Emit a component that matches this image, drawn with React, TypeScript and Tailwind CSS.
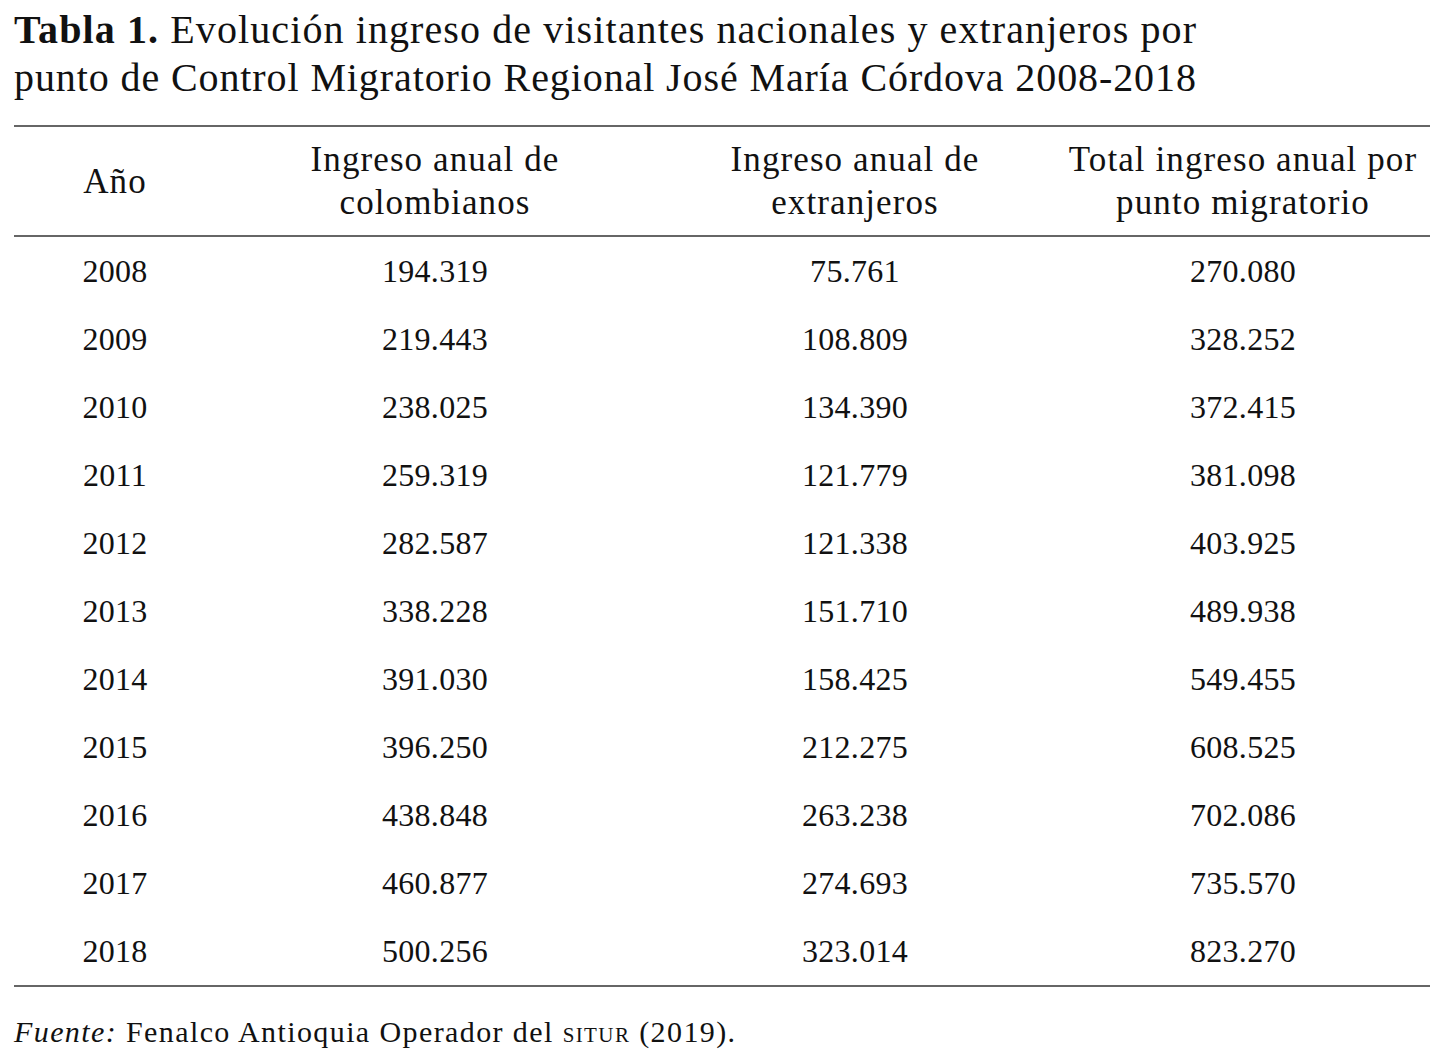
const ROWS: [string, string, string, string][] = [
  ['2008', '194.319', '75.761', '270.080'],
  ['2009', '219.443', '108.809', '328.252'],
  ['2010', '238.025', '134.390', '372.415'],
  ['2011', '259.319', '121.779', '381.098'],
  ['2012', '282.587', '121.338', '403.925'],
  ['2013', '338.228', '151.710', '489.938'],
  ['2014', '391.030', '158.425', '549.455'],
  ['2015', '396.250', '212.275', '608.525'],
  ['2016', '438.848', '263.238', '702.086'],
  ['2017', '460.877', '274.693', '735.570'],
  ['2018', '500.256', '323.014', '823.270'],
];

const COLS = 'grid grid-cols-[202px_438px_402px_374px]';

export default function App() {
  return (
    <div className="min-h-[1060px] w-[1443px] bg-white pl-[14px] pt-[6px] text-[#111] [font-family:'Liberation_Serif','DejaVu_Serif',serif]">
      <h1 className="text-[40px] leading-[48px] tracking-[1.1px]">
        <span className="font-bold">Tabla 1.</span> Evolución ingreso de visitantes nacionales y extranjeros por
        <br />
        <span className="tracking-[0.9px]">punto de Control Migratorio Regional José María Córdova 2008-2018</span>
      </h1>

      <div className="mt-[23px] w-[1416px]">
        <div className={`${COLS} h-[112px] items-center border-y-2 border-[#666] text-center text-[35px] leading-[43px] tracking-[1.1px]`}>
          <div>Año</div>
          <div>
            Ingreso anual de
            <br />
            colombianos
          </div>
          <div>
            Ingreso anual de
            <br />
            extranjeros
          </div>
          <div>
            Total ingreso anual por
            <br />
            punto migratorio
          </div>
        </div>

        <div className="border-b-2 border-[#666]">
          {ROWS.map((r) => (
            <div key={r[0]} className={`${COLS} h-[68px] items-center text-center text-[32px] tracking-[0.3px]`}>
              {r.map((c, i) => (
                <div key={i}>{c}</div>
              ))}
            </div>
          ))}
        </div>
      </div>

      <p className="mt-[22px] text-[30px] tracking-[1.4px]">
        <span className="italic">Fuente:</span> Fenalco Antioquia Operador del{' '}
        <span className="[font-variant:small-caps]">situr</span> (2019).
      </p>
    </div>
  );
}
